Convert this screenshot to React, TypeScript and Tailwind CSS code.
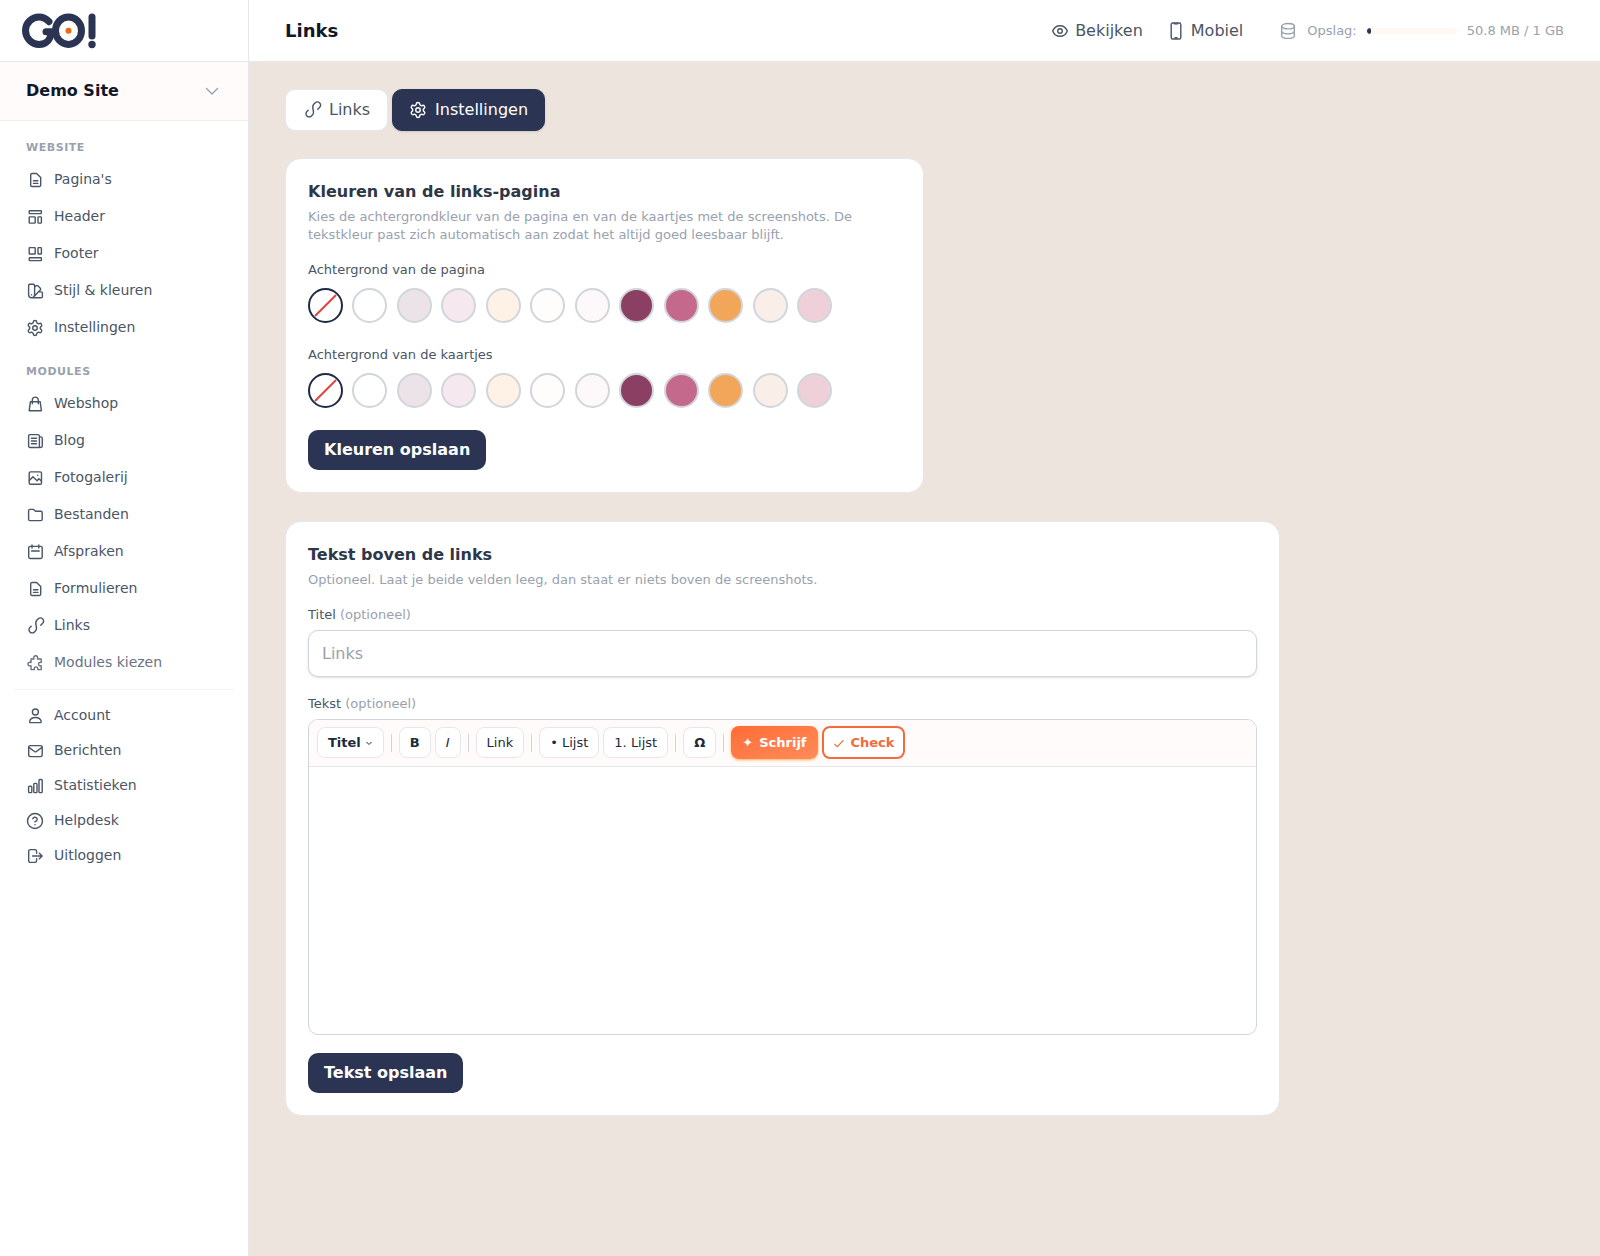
import type { ReactNode } from "react";
import { CircleQuestionMark, Settings } from "lucide-react";

type IconProps = { children: ReactNode; className?: string };

function Icon({ children, className = "" }: IconProps) {
  return (
    <svg
      viewBox="0 0 18 18"
      className={`h-[18px] w-[18px] shrink-0 overflow-visible ${className}`}
      fill="none"
      stroke="currentColor"
      strokeWidth="1.4"
      strokeLinecap="round"
      strokeLinejoin="round"
      aria-hidden
    >
      {children}
    </svg>
  );
}

const FileIcon = () => (
  <Icon>
    <path d="M6 2.5h4.6l4.1 4.1v7.6a1.3 1.3 0 0 1-1.3 1.3H6a1.3 1.3 0 0 1-1.3-1.3V3.8A1.3 1.3 0 0 1 6 2.5zM7.5 9.8h4.4M7.5 12.4h4.4" />
  </Icon>
);

const HeaderIcon = () => (
  <Icon>
    <rect x="3.2" y="2.8" width="12.2" height="2.8" rx=".6" />
    <rect x="3.2" y="8.9" width="6" height="6.2" rx=".6" />
    <rect x="12" y="8.9" width="3.4" height="6.2" rx=".6" />
  </Icon>
);

const FooterIcon = () => (
  <Icon>
    <rect x="3.2" y="2.6" width="6" height="6.4" rx=".6" />
    <rect x="12" y="2.6" width="3.4" height="6.4" rx=".6" />
    <rect x="3.2" y="12.8" width="12.2" height="2.8" rx=".6" />
  </Icon>
);

const SwatchIcon = () => (
  <Icon>
    <path d="M3.8 2.3h3.6a1.2 1.2 0 0 1 1.2 1.2v9.2a3 3 0 0 1-6 0V3.5a1.2 1.2 0 0 1 1.2-1.2zM8.6 5.2l1.5-1.5a1.2 1.2 0 0 1 1.7 0l2.5 2.5a1.2 1.2 0 0 1 0 1.7l-6.5 6.9M12.6 9.9h2.6a1.2 1.2 0 0 1 1.2 1.2v3.4a1.2 1.2 0 0 1-1.2 1.2H5.5M5.6 12.8v.1" />
  </Icon>
);

const GearIcon = () => <Settings size={18} strokeWidth={1.9} className="shrink-0" aria-hidden />;

const BagIcon = () => (
  <Icon>
    <path d="M4.4 6.8h9.8l1.2 8.9H3.2zM6.3 8.8V5.1a3 3 0 0 1 6 0v3.7" />
  </Icon>
);

const NewsIcon = () => (
  <Icon>
    <path d="M13.4 15.5H4a1.4 1.4 0 0 1-1.4-1.4V4A1.4 1.4 0 0 1 4 2.6h7.9A1.5 1.5 0 0 1 13.4 4zM13.4 4.9h1.4a1.5 1.5 0 0 1 1.5 1.5v7.7a1.4 1.4 0 0 1-2.9 0M5.4 6.2h5.1M5.4 9h5.1M5.4 11.8h5.1" />
  </Icon>
);

const ImageIcon = () => (
  <Icon>
    <rect x="3.2" y="2.9" width="12.3" height="12.3" rx="1.3" />
    <path d="M3.4 11.4l3.5-3.7 4.2 4 1.8-1.9 2.4 2.1M11.6 6.2h.1" />
  </Icon>
);

const FolderIcon = () => (
  <Icon>
    <path d="M4 3.4h3.6l2 1.9h5.2a1.4 1.4 0 0 1 1.4 1.4v6.5a1.4 1.4 0 0 1-1.4 1.4H4a1.4 1.4 0 0 1-1.4-1.4V4.8A1.4 1.4 0 0 1 4 3.4z" />
  </Icon>
);

const CalendarIcon = () => (
  <Icon>
    <rect x="2.7" y="3.4" width="13.5" height="12.1" rx="1.4" />
    <path d="M6 2v3M12.8 2v3M5.6 8h7.6" />
  </Icon>
);

const LinkIcon = () => (
  <Icon>
    <path d="M5.2 9.2L3.9 10.5a3.1 3.1 0 0 0 0 4.4 3.2 3.2 0 0 0 4.6 0l.9-.9c1.4-1.4 1.400-3.200.7-5.500M14.800 8.200l1.900-1.900a3.100 3.100 0 0 0 0-4.400 3.200 3.200 0 0 0-4.600 0l-1.200 1.200c-1.400 1.400-1.400 3.100-.8 5.400" />
  </Icon>
);

const PuzzleIcon = () => (
  <Icon>
    <path d="M8 5c-.7-1.9.2-3.2 1.700-3.200s2.400 1.300 1.700 3.200h3.800v3.500c-1.700-.5-2.700.3-2.700 1.600s1 2.100 2.700 1.600v3.900h-3.500c.5-1.800-.4-2.700-1.700-2.700s-2.100.9-1.600 2.700H5v-3.900c-1.900.6-3.100-.3-3.100-1.600S3.100 7.900 5 8.500V5z" />
  </Icon>
);

const UserIcon = () => (
  <Icon>
    <circle cx="9.4" cy="5" r="3" />
    <path d="M4.3 15.6c-.5 0-.8-.4-.7-.9.4-2.8 3-4.2 5.800-4.200s5.400 1.400 5.800 4.200c.1.500-.2.900-.7.900z" />
  </Icon>
);

const MailIcon = () => (
  <Icon>
    <rect x="2.7" y="3.6" width="13.5" height="11" rx="1.5" />
    <path d="M2.9 5.4l5.6 4.1a1.6 1.6 0 0 0 1.900 0l5.600-4.100" />
  </Icon>
);

const ChartIcon = () => (
  <Icon>
    <rect x="2.6" y="9.3" width="3.2" height="6.3" rx=".8" />
    <rect x="7.8" y="6.4" width="3.2" height="9.2" rx=".8" />
    <rect x="13" y="2.5" width="3.2" height="13.1" rx=".8" />
  </Icon>
);

const HelpIcon = () => <CircleQuestionMark size={18} strokeWidth={1.9} className="shrink-0" aria-hidden />;

const LogoutIcon = () => (
  <Icon>
    <path d="M10.6 6.2v-2A1.6 1.6 0 0 0 9 2.600H4.300a1.600 1.600 0 0 0-1.600 1.600v9.600a1.600 1.600 0 0 0 1.600 1.600H9a1.600 1.600 0 0 0 1.600-1.600v-2M6.600 9h9.600M13.300 6.200L16.200 9l-2.900 2.800" />
  </Icon>
);

const EyeIcon = () => (
  <Icon>
    <path d="M1.7 9C3 5.6 5.8 3.7 9 3.7S15 5.6 16.3 9C15 12.4 12.2 14.3 9 14.3S3 12.4 1.7 9z" />
    <circle cx="9" cy="9" r="2.3" />
  </Icon>
);

const PhoneIcon = () => (
  <Icon>
    <rect x="4.2" y="1" width="9.6" height="16" rx="1.6" />
    <path d="M7.5 1.2v.7h3v-.7M8 15.7h2" />
  </Icon>
);

const DatabaseIcon = () => (
  <Icon className="text-gray-400">
    <ellipse cx="9" cy="4.2" rx="6.3" ry="2.7" />
    <path d="M2.7 4.2v9.5c0 1.5 2.8 2.7 6.3 2.7s6.3-1.2 6.3-2.7V4.2M2.7 9c0 1.5 2.8 2.7 6.3 2.7s6.3-1.2 6.3-2.7" />
  </Icon>
);

const website = [
  { label: "Pagina's", icon: <FileIcon /> },
  { label: "Header", icon: <HeaderIcon /> },
  { label: "Footer", icon: <FooterIcon /> },
  { label: "Stijl & kleuren", icon: <SwatchIcon /> },
  { label: "Instellingen", icon: <GearIcon /> },
];

const modules = [
  { label: "Webshop", icon: <BagIcon /> },
  { label: "Blog", icon: <NewsIcon /> },
  { label: "Fotogalerij", icon: <ImageIcon /> },
  { label: "Bestanden", icon: <FolderIcon /> },
  { label: "Afspraken", icon: <CalendarIcon /> },
  { label: "Formulieren", icon: <FileIcon /> },
  { label: "Links", icon: <LinkIcon /> },
  { label: "Modules kiezen", icon: <PuzzleIcon />, muted: true },
];

const account = [
  { label: "Account", icon: <UserIcon /> },
  { label: "Berichten", icon: <MailIcon /> },
  { label: "Statistieken", icon: <ChartIcon /> },
  { label: "Helpdesk", icon: <HelpIcon /> },
  { label: "Uitloggen", icon: <LogoutIcon /> },
];

const swatches = [
  "#ffffff",
  "#ece3e9",
  "#f5e8ee",
  "#fef2e6",
  "#fefdfc",
  "#fdf8fa",
  "#8b3f62",
  "#c5698c",
  "#f2a65a",
  "#faeee8",
  "#f0d0d8",
];

function Logo() {
  return (
    <svg viewBox="0 0 76 36" className="h-9 w-[76px]" fill="none" role="img" aria-label="GO!">
      <g stroke="#2b3553" strokeWidth="7" strokeLinecap="round">
        <path d="M27 8.7C24.3 5.7 21 4 17 4 10 4 3.5 9.8 3.5 17.6S10 31.5 17 31.5c7 0 12-5 12.2-12.8H24" />
        <ellipse cx="46.5" cy="17.7" rx="13" ry="13.7" />
        <path d="M70 4v19" />
      </g>
      <circle cx="70" cy="31.5" r="3.7" fill="#2b3553" />
      <circle cx="46.5" cy="17.7" r="3" fill="#f2660f" />
    </svg>
  );
}

type Item = { label: string; icon: ReactNode; muted?: boolean };

function NavList({ items, dense = false }: { items: Item[]; dense?: boolean }) {
  return (
    <ul>
      {items.map((item) => (
        <li key={item.label}>
          <a
            href="#"
            className={`flex items-center gap-2.5 px-[26px] text-[14px] leading-[21px] ${dense ? "py-[7px]" : "py-2"} ${
              item.muted ? "text-gray-500" : "text-gray-600"
            }`}
          >
            {item.icon}
            {item.label}
          </a>
        </li>
      ))}
    </ul>
  );
}

function NavHeading({ children }: { children: ReactNode }) {
  return (
    <h2 className="px-[26px] pt-[18px] pb-[5px] text-[11px] leading-4 font-bold tracking-wider text-gray-400">
      {children}
    </h2>
  );
}

function Sidebar() {
  return (
    <aside className="w-[249px] shrink-0 border-r border-gray-200 bg-white">
      <div className="flex h-[62px] items-center border-b border-gray-200 px-[22px]">
        <Logo />
      </div>
      <button
        type="button"
        className="flex w-full items-center justify-between border-b border-[#f3eeec] bg-[#fffbfa] py-[17px] pr-7 pl-[26px] text-[16px] leading-6 font-bold text-gray-900"
      >
        Demo Site
        <svg viewBox="0 0 16 16" className="h-4 w-4 text-gray-400" fill="none" stroke="currentColor" strokeWidth="1.4" strokeLinecap="round" strokeLinejoin="round" aria-hidden>
          <path d="M2.5 5.5L8 11l5.5-5.5" />
        </svg>
      </button>
      <nav className="pt-px">
        <NavHeading>WEBSITE</NavHeading>
        <NavList items={website} />
        <NavHeading>MODULES</NavHeading>
        <NavList items={modules} />
        <hr className="mx-3.5 my-2 border-[#f3f1f1]" />
        <NavList items={account} dense />
      </nav>
    </aside>
  );
}

function Topbar() {
  return (
    <header className="flex h-[62px] items-center justify-between border-b border-gray-200 bg-white px-9">
      <h1 className="text-[18px] font-bold text-gray-900">Links</h1>
      <div className="flex items-center text-gray-600">
        <a href="#" className="flex items-center gap-1.5 text-[16px]">
          <EyeIcon />
          Bekijken
        </a>
        <a href="#" className="ml-6 flex items-center gap-1.5 text-[16px]">
          <PhoneIcon />
          Mobiel
        </a>
        <div className="ml-9 flex items-center gap-2.5 text-[13px] text-gray-400">
          <DatabaseIcon />
          <span>Opslag:</span>
          <div className="h-1.5 w-[90px] overflow-hidden rounded-full bg-[#fff8f2]">
            <div className="h-full rounded-full bg-[#2b3553]" style={{ width: `${(50.8 / 1024) * 100}%` }} />
          </div>
          <span>50.8 MB / 1 GB</span>
        </div>
      </div>
    </header>
  );
}

function SwatchRow({ label }: { label: string }) {
  return (
    <fieldset>
      <legend className="text-[13px] leading-[18px] text-gray-600">{label}</legend>
      <div className="mt-[9px] flex max-w-[524px] justify-between">
        <button
          type="button"
          aria-label="Geen kleur"
          className="flex h-[35px] w-[35px] items-center justify-center rounded-full border-2 border-[#1f2a44] bg-white"
        >
          <svg viewBox="0 0 31 31" className="h-full w-full" stroke="#e53e3e" strokeWidth="2" aria-hidden>
            <path d="M5 26L26 5" />
          </svg>
        </button>
        {swatches.map((color) => (
          <button
            key={color}
            type="button"
            aria-label={color}
            className="h-[35px] w-[35px] rounded-full border-2 border-gray-300"
            style={{ backgroundColor: color }}
          />
        ))}
      </div>
    </fieldset>
  );
}

function SaveButton({ children }: { children: ReactNode }) {
  return (
    <button type="submit" className="rounded-[10px] bg-[#2b3553] px-4 py-2 text-[16px] leading-6 font-bold text-white">
      {children}
    </button>
  );
}

function Tool({ children, className = "" }: { children: ReactNode; className?: string }) {
  return (
    <button
      type="button"
      className={`flex h-[31px] items-center rounded-lg border border-gray-200 bg-white px-2.5 text-[13px] text-gray-800 ${className}`}
    >
      {children}
    </button>
  );
}

const Divider = () => <span className="mx-[3px] h-[18px] w-px bg-gray-300" />;

function Editor() {
  return (
    <div className="mt-1.5 overflow-hidden rounded-[10px] border border-gray-300 bg-white">
      <div className="flex flex-wrap items-center gap-1 border-b border-gray-200 bg-[#fffbfa] px-2 pt-1.5 pb-[7px]">
        <Tool className="gap-1 font-bold">
          Titel
          <svg viewBox="0 0 8 8" className="h-2 w-2" fill="none" stroke="currentColor" strokeWidth="1" aria-hidden>
            <path d="M1.5 3L4 5.5 6.500 3" />
          </svg>
        </Tool>
        <Divider />
        <Tool className="font-bold">B</Tool>
        <Tool className="italic">I</Tool>
        <Divider />
        <Tool>Link</Tool>
        <Divider />
        <Tool>• Lijst</Tool>
        <Tool>1. Lijst</Tool>
        <Divider />
        <Tool className="font-bold">Ω</Tool>
        <Divider />
        <button
          type="button"
          className="flex h-[33px] items-center gap-1.5 rounded-lg bg-linear-to-br from-[#ff6b35] to-[#ff8c5a] px-[11px] text-[13px] font-bold text-white shadow-sm shadow-orange-300"
        >
          <span>✦</span>
          Schrijf
        </button>
        <button
          type="button"
          className="flex h-[33px] items-center gap-1.5 rounded-lg border-2 border-[#f26a3d] bg-white px-[9px] text-[13px] font-bold text-[#f26a3d]"
        >
          <svg viewBox="0 0 12 12" className="h-3 w-3" fill="none" stroke="currentColor" strokeWidth="1.1" aria-hidden>
            <path d="M1.5 7l2.8 2.700L10.500 3.200" />
          </svg>
          Check
        </button>
      </div>
      <div contentEditable suppressContentEditableWarning role="textbox" aria-labelledby="text-label" className="min-h-[267px] outline-none" />
    </div>
  );
}

export default function App() {
  return (
    <div className="flex min-h-screen bg-[#ede4de] font-['DejaVu_Sans',sans-serif]">
      <Sidebar />
      <div className="min-w-0 flex-1">
        <Topbar />
        <main className="px-9 py-[27px]">
          <div className="flex items-center gap-1 text-[16px] leading-6">
            <a href="#" className="flex items-center gap-2 rounded-[10px] border border-gray-200 bg-white px-[17px] py-2 text-gray-600">
              <LinkIcon />
              Links
            </a>
            <a href="#" className="flex items-center gap-2 rounded-[10px] border border-[#2b3553] bg-[#2b3553] px-4 py-2 text-white shadow-sm">
              <GearIcon />
              Instellingen
            </a>
          </div>

          <form className="mt-[27px] max-w-[639px] rounded-2xl border border-gray-200 bg-white p-[22px]">
            <h2 className="text-[16px] leading-[22px] font-bold text-[#2d3748]">Kleuren van de links-pagina</h2>
            <p className="mt-[5px] text-[13px] leading-[18px] text-gray-400">
              Kies de achtergrondkleur van de pagina en van de kaartjes met de screenshots. De tekstkleur past zich
              automatisch aan zodat het altijd goed leesbaar blijft.
            </p>
            <div className="mt-[17px] mb-[22px] flex flex-col gap-[23px]">
              <SwatchRow label="Achtergrond van de pagina" />
              <SwatchRow label="Achtergrond van de kaartjes" />
            </div>
            <SaveButton>Kleuren opslaan</SaveButton>
          </form>

          <form className="mt-7 max-w-[995px] rounded-2xl border border-gray-200 bg-white p-[22px]">
            <h2 className="text-[16px] leading-[22px] font-bold text-[#2d3748]">Tekst boven de links</h2>
            <p className="mt-[5px] text-[13px] leading-[18px] text-gray-400">
              Optioneel. Laat je beide velden leeg, dan staat er niets boven de screenshots.
            </p>
            <label htmlFor="title" className="mt-[17px] block text-[13px] leading-[18px] text-gray-600">
              Titel <span className="text-gray-400">(optioneel)</span>
            </label>
            <input
              id="title"
              placeholder="Links"
              className="mt-1.5 h-[47px] w-full rounded-[10px] border border-gray-300 bg-white px-[13px] text-[16px] shadow-sm placeholder:text-gray-400"
            />
            <div id="text-label" className="mt-[18px] text-[13px] leading-[18px] text-gray-600">
              Tekst <span className="text-gray-400">(optioneel)</span>
            </div>
            <Editor />
            <div className="mt-[18px]">
              <SaveButton>Tekst opslaan</SaveButton>
            </div>
          </form>
        </main>
      </div>
    </div>
  );
}
